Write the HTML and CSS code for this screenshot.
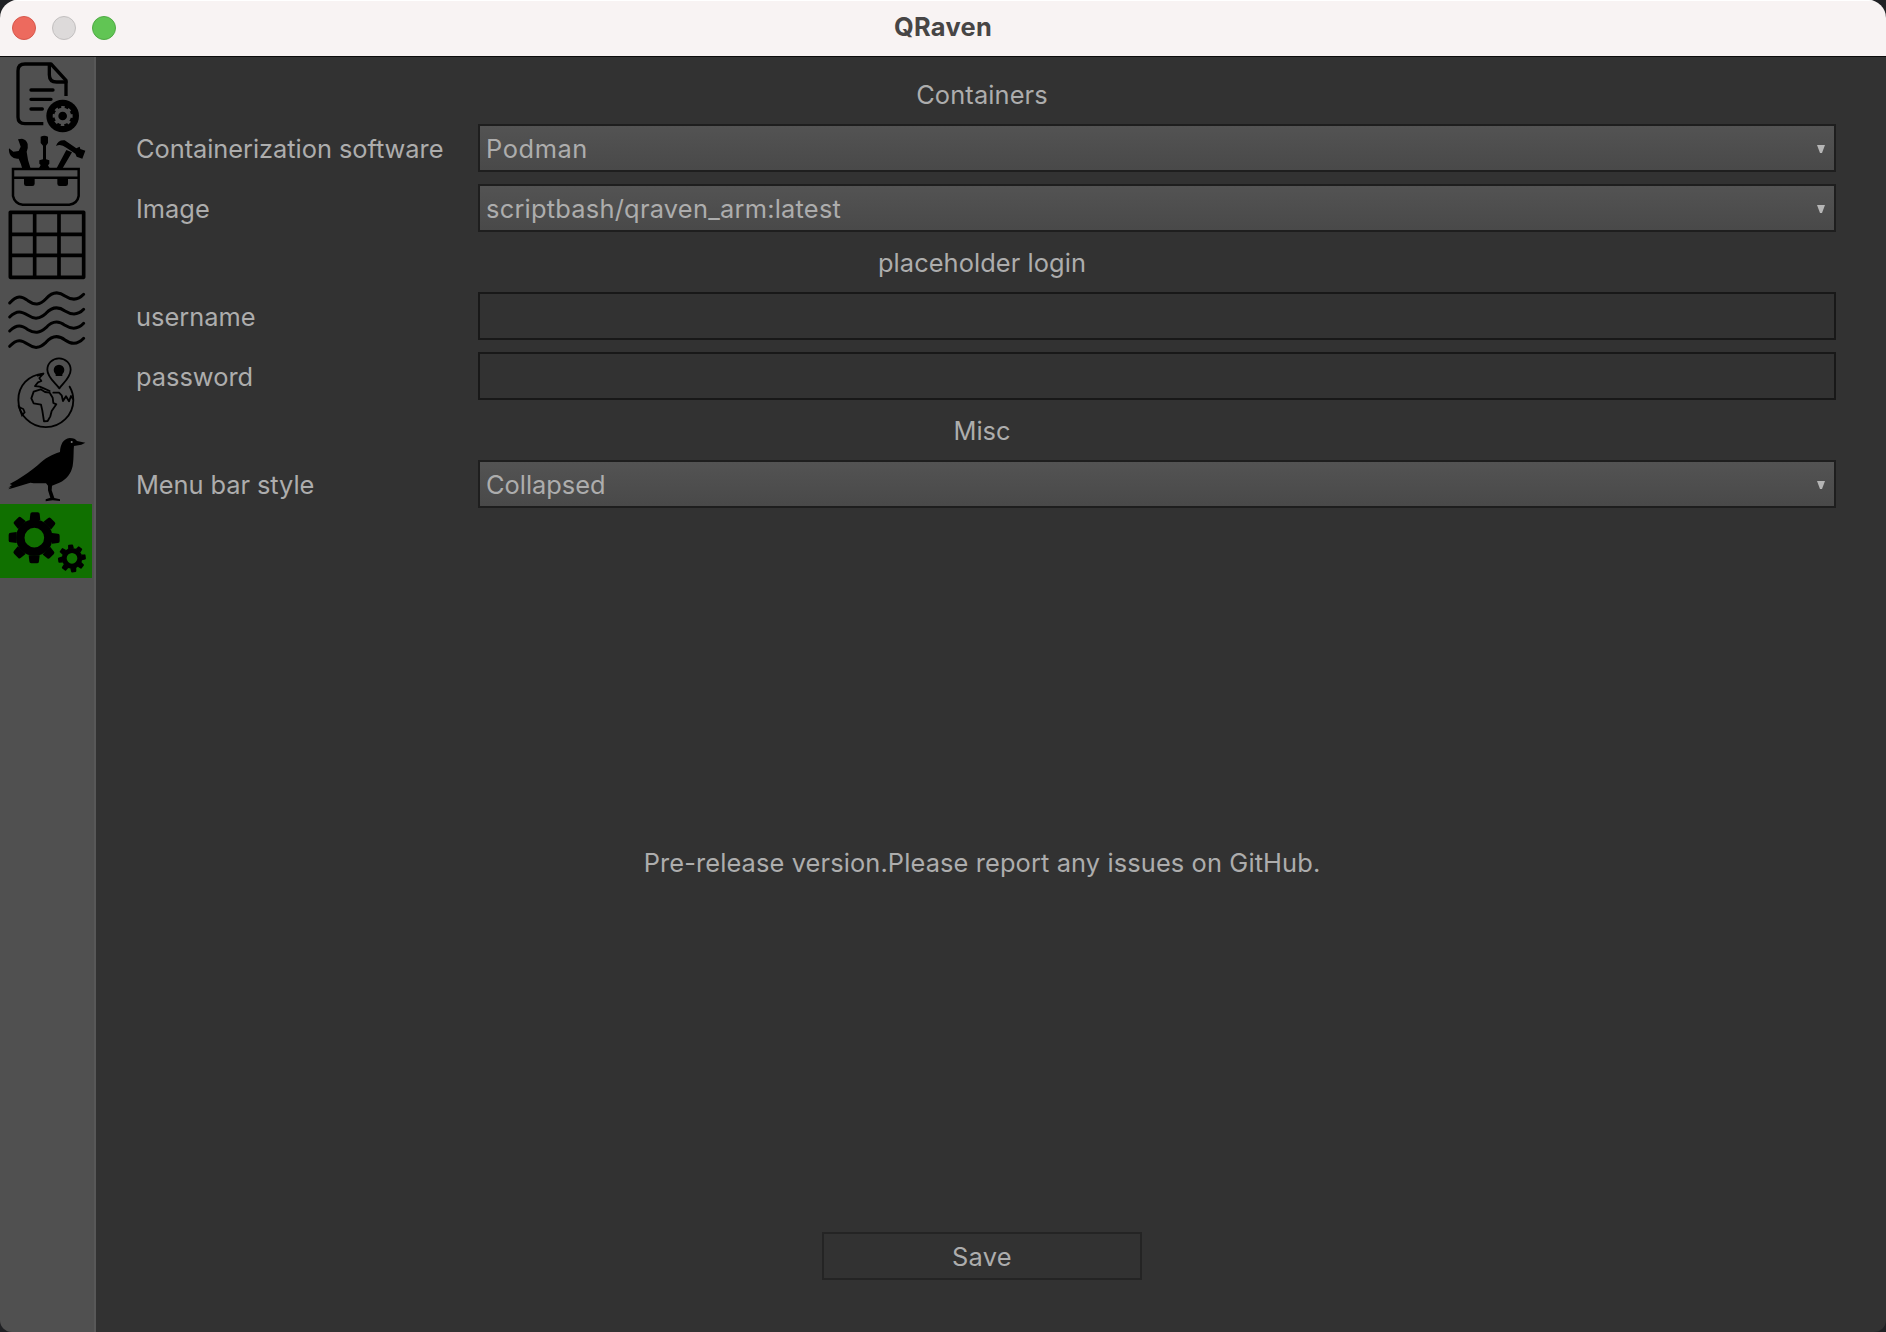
FILE: index.html
```html
<!DOCTYPE html>
<html lang="en">
<head>
<meta charset="utf-8">
<title>QRaven</title>
<link rel="stylesheet" href="styles.css">
</head>
<body>
<div class="window">
  <header class="titlebar">
    <div class="lights"><span class="light close"></span><span class="light minimize"></span><span class="light zoom"></span></div>
    <h1 class="title">QRaven</h1>
  </header>
  <div class="body">
    <nav class="sidebar">
      <a class="item"><svg viewBox="0 180 276 222">
        <g fill="none" stroke="#000" stroke-width="10" stroke-linecap="round" stroke-linejoin="round">
          <path d="M130 371H75Q54 371 54 352V212Q54 192 75 192H153L198 241V288" stroke-linecap="butt"/>
          <path d="M148 194V224Q148 246 170 246H198M93 270H159M93 298H153M93 327H127"/>
        </g>
        <circle cx="188" cy="348" r="49"/>
        <circle cx="188" cy="348" r="19" fill="none" stroke="#505050" stroke-width="12"/>
        <circle cx="188" cy="348" r="26" fill="none" stroke="#505050" stroke-width="8" stroke-dasharray="10.2 10.22" transform="rotate(-11 188 348)"/>
      </svg></a>
      <a class="item"><svg viewBox="0 12 276 222">
        <path d="M54 28L66 26Q80 29 83 42Q85 53 80 65Q82 88 92 116H67Q63 101 56 86Q42 88 33 78Q25 68 27 55L40 65L56 63L62 50L58 38Z"/>
        <path d="M122 20Q133 15 144 20V39L138 47V88L148 91V101L144 106L150 116H116L122 105L118 101V91L129 88V47L122 39Z"/>
        <path d="M168 48Q174 29 194 31L229 55L239 50L241 57L256 62L247 86L230 80L226 71L199 53Q182 40 168 48ZM199 60L216 67L187 116H169Z"/>
        <g fill="none" stroke="#000" stroke-width="7.500"><path d="M39 117H236V198Q232 221 208 224H68Q44 221 39 198ZM39 143H236"/></g>
        <path d="M72 143H104V161Q104 168 97 168H79Q72 168 72 161ZM172 143H204V161Q204 168 197 168H179Q172 168 172 161Z"/>
      </svg></a>
      <a class="item"><svg viewBox="0 9 276 222">
        <path d="M31 22H251V217H31ZM104 22V217M177 22V217M31 88H251M31 151H251" fill="none" stroke="#000" stroke-width="11" stroke-linejoin="round"/>
      </svg></a>
      <a class="item"><svg viewBox="0 6 276 222">
        <g fill="none" stroke="#000" stroke-width="9" stroke-linecap="round">
          <path d="M29 69C51 44 65 48 84 62C104 76 119 76 138 56C156 36 174 32 195 48C216 62 235 60 251 43"/>
          <path d="M29 111C51 89 65 94 84 106C104 119 119 117 138 100C156 81 174 78 195 93C216 106 235 105 251 88"/>
          <path d="M29 153C51 132 65 136 84 149C104 161 119 160 138 143C156 123 174 120 195 136C216 149 235 147 251 130"/>
          <path d="M29 199C51 175 65 180 84 193C104 207 119 205 138 187C156 167 174 164 195 180C216 195 235 192 251 175"/>
        </g>
      </svg></a>
      <a class="item"><svg viewBox="0 12 276 222">
        <g fill="none" stroke="#000" stroke-width="5.500" stroke-linejoin="round" stroke-linecap="round">
          <path d="M130 65C85 69 55 101 55 144A82.500 81.500 0 0 0 220 144C220 130 216 116 209 104"/>
          <path d="M178 109C164 91 142 75 142 53A35 34 0 0 1 212 53C212 75 192 91 178 109Z"/>
          <path d="M130 65L118 78L124 87L114 91L105 102L119 104L133 110L149 117M130 65L113 71"/>
          <path d="M122 112L101 119L94 139L101 154L123 158L127 176L132 208L143 207L151 193L155 177L169 157L160 153L158 137L149 122L135 120Z"/>
          <path d="M160 122H177L185 130L189 147L198 133L207 148L213 132L219 141"/>
        </g>
        <path d="M57 165L70 171L74 181L66 190Z" fill="none" stroke="#000" stroke-width="5"/>
        <circle cx="177" cy="54" r="16"/><path d="M167 66H187V72H167Z"/>
      </svg></a>
      <a class="item"><svg viewBox="0 0 276 222">
        <path d="M180 66C181 43 190 26 209 24C221 24 227 28 231 33L256 38L244 44L222 48C220 63 222 82 218 108C213 131 200 149 178 158L156 167L155 181L163 204L180 208V213L158 211L137 214V208L151 203L144 181V167L138 160C121 160 104 160 91 158L39 174L25 178L33 171L25 173L36 165L29 162L52 149C74 137 95 121 113 106C136 84 154 74 180 66Z"/>
        <circle cx="215" cy="36" r="3" fill="#777"/>
      </svg></a>
      <a class="item active"><svg viewBox="0 12 276 222">
        <g fill="none" stroke="#000">
          <circle cx="103" cy="113" r="42" stroke-width="25"/>
          <circle cx="216" cy="175" r="23.500" stroke-width="15"/>
        </g>
        <g id="teeth">
          <path id="pair" d="M89 60L91 42Q91 37 97 37H113Q119 37 119 42L121 60ZM119 166L117 184Q117 190 112 190H94Q88 190 88 184L86 166Z"/>
          <use href="#pair" transform="rotate(45 103 113)"/>
          <use href="#pair" transform="rotate(90 103 113)"/>
          <use href="#pair" transform="rotate(135 103 113)"/>
        </g>
        <use href="#teeth" transform="translate(216 175) rotate(-8) scale(.545) translate(-103 -113)"/>
      </svg></a>
    </nav>
    <main class="content">
      <form class="form">
        <h2 class="heading"><span class="t-containers">Containers</span></h2>
        <label class="label"><span class="t-software">Containerization software</span></label>
        <div class="select"><span class="t-podman">Podman</span><svg class="arrow" viewBox="0 0 8 8"><path d="M0 0H8L5 8H3Z"/></svg></div>
        <label class="label">Image</label>
        <div class="select"><span class="t-latest">scriptbash/qraven_arm:latest</span><svg class="arrow" viewBox="0 0 8 8"><path d="M0 0H8L5 8H3Z"/></svg></div>
        <h2 class="heading"><span class="t-login">placeholder login</span></h2>
        <label class="label" for="username">username</label>
        <input class="input" id="username" type="text">
        <label class="label" for="password">password</label>
        <input class="input" id="password" type="password">
        <h2 class="heading">Misc</h2>
        <label class="label"><span class="t-menu">Menu bar style</span></label>
        <div class="select"><span>Collapsed</span><svg class="arrow" viewBox="0 0 8 8"><path d="M0 0H8L5 8H3Z"/></svg></div>
      </form>
      <p class="notice"><span class="t-notice">Pre-release version.Please report any issues on GitHub.</span></p>
      <button class="save" type="button"><span class="t-save">Save</span></button>
    </main>
  </div>
</div>
</body>
</html>
```
FILE: styles.css
```css
* { box-sizing: border-box; }
body {
  margin: 0;
  background: #202124;
  font: 25.4px/36px Inter, "Liberation Sans", sans-serif;
  color: #adadad;
}
.window {
  height: 1332px;
  display: flex;
  flex-direction: column;
  border-radius: 18px 18px 12px 12px;
  overflow: hidden;
  background: #323232;
}
.titlebar {
  flex: none;
  height: 57px;
  display: grid;
  grid-template-columns: 1fr auto 1fr;
  align-items: center;
  padding: 0 12px 4px;
  background: #f8f3f3;
  border-top: 1px solid #fff;
  border-bottom: 1px solid #0c0c0c;
}
.lights { display: flex; gap: 16px; padding-top: 2px; }
.light { width: 24px; height: 24px; border-radius: 50%; border: 1px solid; }
.close { background: #ed6a5e; border-color: #d6584d; }
.minimize { background: #dddada; border-color: #c2bfbf; }
.zoom { background: #61c554; border-color: #50aa45; }
.title { margin: 0; font-size: 25.4px; font-weight: 700; letter-spacing: .3px; color: #474545; }
.body { flex: 1; display: flex; }
.sidebar {
  flex: none;
  width: 96px;
  padding-top: 3px;
  background: #505050;
  border-right: 2px solid #585858;
}
.item { display: block; width: 92px; height: 74px; }
.item svg { display: block; width: 92px; height: 74px; }
.active { background: #107000; }
.content {
  flex: 1;
  display: flex;
  flex-direction: column;
  padding: 19px 50px 52px 32px;
}
.form {
  display: grid;
  grid-template-columns: 342px 1fr;
  column-gap: 8px;
  row-gap: 12px;
  align-items: center;
}
.heading {
  grid-column: 1 / -1;
  height: 36px;
  margin: 0;
  padding-top: 1px;
  font-size: inherit;
  font-weight: 400;
  text-align: center;
}
.label { padding: 2px 0 0 8px; }
.select {
  height: 48px;
  display: flex;
  align-items: center;
  justify-content: space-between;
  padding: 0 9px 0 6px;
  border: 2px solid #1e1e1e;
  background: linear-gradient(#535353, #494949);
}
.select span { padding-top: 2px; }
.arrow { width: 8px; height: 8px; margin-top: 2px; fill: #b5b5b5; }
.input {
  width: 100%;
  height: 48px;
  border: 2px solid #181818;
  background: #323232;
  color: inherit;
  font: inherit;
  padding: 0 6px;
}
.notice {
  flex: 1;
  display: flex;
  align-items: center;
  justify-content: center;
  margin: 14px 0 28px;
}
.save {
  align-self: center;
  width: 320px;
  height: 48px;
  padding: 2px 0 0;
  border: 2px solid #242424;
  background: #323232;
  color: inherit;
  font: inherit;
}
.t-containers { letter-spacing: .12px; }
.t-software { letter-spacing: -.04px; }
.t-podman { letter-spacing: .6px; }
.t-latest { letter-spacing: .24px; }
.t-login { letter-spacing: .07px; }
.t-menu { letter-spacing: -.07px; }
.t-notice { letter-spacing: .12px; }
.t-save { letter-spacing: .3px; }
```
